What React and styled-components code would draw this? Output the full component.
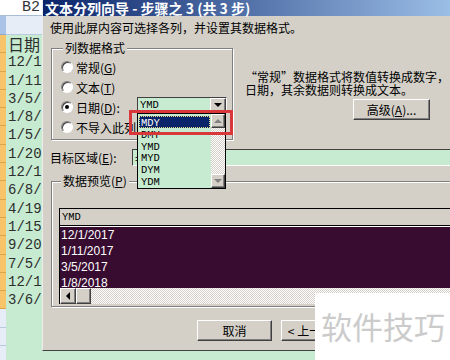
import React from 'react';
import styled, { createGlobalStyle, css } from 'styled-components';

const GlobalStyle = createGlobalStyle`
  html, body { margin: 0; padding: 0; }
  body {
    width: 450px;
    height: 360px;
    overflow: hidden;
    background: #c7ebd1;
    font-family: "Noto Sans CJK SC", sans-serif;
  }
`;

const raised = css`
  background: #d4d0c8;
  border: 1px solid;
  border-color: #fff #404040 #404040 #fff;
  box-shadow: inset -1px -1px #808080;
  box-sizing: border-box;
`;

const checker = css`
  background: repeating-conic-gradient(#fff 0 25%, #d4d0c8 0 50%) 0 0 / 2px 2px;
`;

const Screen = styled.div`
  position: relative;
  width: 450px;
  height: 360px;
  overflow: hidden;
  display: flex;
  align-items: flex-start;
  background: #c7ebd1;
`;

/* spreadsheet strip behind the dialog */
const Sheet = styled.div`
  width: 42px;
  flex: none;
  display: flex;
  flex-direction: column;
`;

const NameBox = styled.div`
  height: 15px;
  background: #fff;
  border-bottom: 1px solid #a9bcd6;
  text-align: right;
  padding-right: 2px;
  font: 15px/15px "Liberation Mono", monospace;
  color: #333;
`;

const HeadRow = styled.div`
  height: 19px;
  display: flex;
`;

const Corner = styled.div`
  width: 6px;
  background: #a8c3e6;
  border-bottom: 1px solid #8ea9cf;
`;

const ColHead = styled.div`
  flex: 1;
  background: #e6edf7;
  border-bottom: 1px solid #b9c9de;
`;

const SheetRow = styled.div`
  height: 18.3px;
  display: flex;
  box-sizing: border-box;
`;

const RowHead = styled.div`
  width: 6px;
  box-sizing: border-box;
  background: ${(p) => (p.$active ? '#f8c46a' : '#e6edf7')};
  border-bottom: 1px solid ${(p) => (p.$active ? '#dba34a' : '#b9c9de')};
`;

const Cell = styled.div`
  flex: 1;
  padding-left: 2px;
  overflow: hidden;
  white-space: nowrap;
  color: #2e2e2e;
  font: ${(p) => (p.$cjk ? '16px/18px "Noto Sans CJK SC"' : '14px/18px "Liberation Mono"')}, monospace;
`;

/* dialog */
const Dialog = styled.div`
  width: 440px;
  height: 351px;
  flex: none;
  box-sizing: border-box;
  display: flex;
  flex-direction: column;
  background: #d4d0c8;
  border-left: 1px solid #ececec;
  border-bottom: 1px solid #404040;
  font: 12px "Noto Sans CJK SC", sans-serif;
  color: #000;
`;

const TitleBar = styled.div`
  height: 16px;
  padding-left: 2px;
  background: linear-gradient(to right, #0a246a, #a6caf0);
  color: #fff;
  font: bold 14px/16px "Noto Sans CJK SC", sans-serif;
  white-space: nowrap;
`;

const Body = styled.div`
  flex: 1;
  display: flex;
  flex-direction: column;
  padding: 4px 0 0 7px;
`;

const Intro = styled.div`
  line-height: 16px;
  white-space: nowrap;
`;

const TopSection = styled.div`
  display: flex;
  align-items: flex-start;
  margin-top: 5px;
`;

const Group = styled.fieldset`
  margin: 0 0 0 1px;
  min-width: 0;
  box-sizing: border-box;
  width: ${(p) => p.$width};
  border: 1px solid #808080;
  box-shadow: inset 1px 1px #fff, 1px 1px #fff;
  padding: ${(p) => p.$pad};
`;

const Legend = styled.legend`
  padding: 0 2px;
  margin-left: 2px;
  line-height: 14px;
  background: #d4d0c8;
`;

const RadioRow = styled.div`
  height: 20px;
  display: flex;
  align-items: ${(p) => (p.$top ? 'flex-start' : 'center')};
  white-space: nowrap;
`;

const Radio = styled.span`
  position: relative;
  width: 12px;
  height: 12px;
  flex: none;
  margin-right: 3px;
  margin-top: ${(p) => (p.$top ? '4px' : '0')};
  border-radius: 50%;
  background: #fff;
  box-sizing: border-box;
  border: 1px solid;
  border-color: #808080 #fff #fff #808080;
  box-shadow: inset 1px 1px #404040;

  &::after {
    content: '';
    display: ${(p) => (p.$checked ? 'block' : 'none')};
    position: absolute;
    left: 3px;
    top: 3px;
    width: 4px;
    height: 4px;
    border-radius: 50%;
    background: #000;
  }
`;

const RadioLabel = styled.span`
  width: ${(p) => p.$width || 'auto'};
  margin-top: ${(p) => (p.$top ? '2px' : '0')};
  flex: none;
`;

const Combo = styled.div`
  position: relative;
  z-index: 2;
  width: 90px;
`;

const ComboField = styled.div`
  height: 16px;
  display: flex;
  box-sizing: border-box;
  background: #c7ebd1;
  border: 1px solid;
  border-color: #404040 #fff #fff #404040;
`;

const MonoText = styled.span`
  flex: 1;
  padding-left: 2px;
  font: 10.5px/14px "Liberation Mono", monospace;
  color: ${(p) => (p.$light ? '#fff' : '#000')};
`;

const ArrowButton = styled.span`
  ${raised}
  width: ${(p) => p.$w || '16px'};
  height: ${(p) => p.$h || '14px'};
  flex: none;
  display: flex;
  align-items: center;
  justify-content: center;
`;

const Arrow = styled.span`
  width: 0;
  height: 0;
  border-style: solid;
  ${({ $dir, $color = '#000' }) => {
    if ($dir === 'down')
      return css`border-width: 4px 4px 0 4px; border-color: ${$color} transparent transparent transparent;`;
    if ($dir === 'up')
      return css`border-width: 0 4px 4px 4px; border-color: transparent transparent ${$color} transparent;`;
    return css`border-width: 4px 4px 4px 0; border-color: transparent ${$color} transparent transparent;`;
  }}
`;

const DropList = styled.div`
  position: absolute;
  top: 16px;
  left: 0;
  width: 89px;
  height: 76px;
  box-sizing: border-box;
  display: flex;
  background: #c7ebd1;
  border: 1px solid #000;
`;

const Items = styled.div`
  flex: 1;
  padding: 2px 1px 0 1px;
`;

const Item = styled.div`
  height: 11.8px;
  display: flex;
  box-sizing: border-box;
  ${(p) =>
    p.$selected &&
    css`
      background: #0a246a;
      outline: 1px dotted #e8d880;
      outline-offset: -1px;
    `}
`;

const VScroll = styled.div`
  width: 14px;
  display: flex;
  flex-direction: column;
  justify-content: space-between;
  ${checker}
`;

const Highlight = styled.div`
  position: absolute;
  left: -8px;
  top: 13px;
  width: 104px;
  height: 25px;
  box-sizing: border-box;
  border: 3px solid #d8383a;
  z-index: 3;
`;

const Side = styled.div`
  margin-left: 12px;
  padding-top: 29px;
  display: flex;
  flex-direction: column;
  align-items: flex-start;
`;

const Note = styled.div`
  line-height: 13px;
  white-space: nowrap;
`;

const Button = styled.button`
  ${raised}
  width: ${(p) => p.$width || '75px'};
  height: 21px;
  margin-left: ${(p) => p.$offset || '0'};
  margin-top: ${(p) => p.$top || '0'};
  padding: 0;
  font: 12px "Noto Sans CJK SC", sans-serif;
  color: #000;
  white-space: nowrap;
`;

const TargetRow = styled.div`
  display: flex;
  align-items: center;
  margin-top: 9px;
  height: 17px;
`;

const FieldLabel = styled.span`
  width: 82px;
  flex: none;
  white-space: nowrap;
`;

const Input = styled.div`
  flex: 1;
  height: 17px;
  box-sizing: border-box;
  padding-left: 2px;
  background: #c7ebd1;
  border: 1px solid;
  border-color: #404040 #fff #fff #404040;
  line-height: 15px;
`;

const PreviewBox = styled.div`
  height: 96px;
  box-sizing: border-box;
  display: flex;
  flex-direction: column;
  border-top: 1px solid #000;
  border-left: 1px solid #000;
  background: #d4d0c8;
`;

const PreviewHead = styled.div`
  height: 16px;
  display: flex;
  align-items: center;
  border-bottom: 1px solid #000;
  box-shadow: 0 1px #fff;
  margin-bottom: 1px;
`;

const DataArea = styled.div`
  height: 61px;
  overflow: hidden;
  background: #380b30;
`;

const DataRow = styled.div`
  height: 16px;
  padding-left: 1px;
  font: 12px/16px "Liberation Sans", Arial, sans-serif;
  color: #fff;
`;

const HScroll = styled.div`
  height: 16px;
  display: flex;
  ${checker}
`;

const Thumb = styled.span`
  ${raised}
  width: 15px;
  height: 16px;
`;

const ButtonRow = styled.div`
  display: flex;
  gap: 9px;
  margin-top: 13px;
  padding-left: 147px;
`;

const Watermark = styled.div`
  position: absolute;
  left: 315px;
  top: 293px;
  right: 0;
  bottom: 0;
  z-index: 5;
  background: #fff;
  padding: 17px 0 0 6px;
  color: #cbcbcb;
  font: 31px/31px "Noto Sans CJK SC", sans-serif;
  white-space: nowrap;
`;

const Key = ({ k }) => (
  <>
    (<u>{k}</u>)
  </>
);

const sheetRows = [
  '日期', '12/1/2017', '1/11/2017', '3/5/2017', '1/8/2018', '1/5/2018', '1/20/2018',
  '12/1/2018', '6/8/2018', '4/19/2018', '1/15/2019', '9/20/2019', '7/5/2019',
  '12/1/2019', '3/6/2020',
];

const formats = ['MDY', 'DMY', 'YMD', 'MYD', 'DYM', 'YDM'];
const preview = ['12/1/2017', '1/11/2017', '3/5/2017', '1/8/2018', '1/5/2018'];

export default function App() {
  return (
    <Screen>
      <GlobalStyle />
      <Sheet>
        <NameBox>B2</NameBox>
        <HeadRow>
          <Corner />
          <ColHead />
        </HeadRow>
        {sheetRows.map((v, i) => (
          <SheetRow key={i}>
            <RowHead $active />
            <Cell $cjk={i === 0}>{v}</Cell>
          </SheetRow>
        ))}
        {[0, 1, 2].map((i) => (
          <SheetRow key={'e' + i}>
            <RowHead />
            <Cell />
          </SheetRow>
        ))}
      </Sheet>

      <Dialog>
        <TitleBar>文本分列向导 - 步骤之 3 (共 3 步)</TitleBar>
        <Body>
          <Intro>使用此屏内容可选择各列，并设置其数据格式。</Intro>

          <TopSection>
            <Group $width="182px" $pad="2px 4px 2px 9px">
              <Legend>列数据格式</Legend>
              <RadioRow>
                <Radio />
                <RadioLabel>常规<Key k="G" /></RadioLabel>
              </RadioRow>
              <RadioRow>
                <Radio />
                <RadioLabel>文本<Key k="T" /></RadioLabel>
              </RadioRow>
              <RadioRow $top>
                <Radio $checked $top />
                <RadioLabel $width="61px" $top>日期<Key k="D" />:</RadioLabel>
                <Combo>
                  <ComboField>
                    <MonoText>YMD</MonoText>
                    <ArrowButton>
                      <Arrow $dir="down" />
                    </ArrowButton>
                  </ComboField>
                  <DropList>
                    <Items>
                      {formats.map((f, i) => (
                        <Item key={f} $selected={i === 0}>
                          <MonoText $light={i === 0}>{f}</MonoText>
                        </Item>
                      ))}
                    </Items>
                    <VScroll>
                      <ArrowButton $w="14px" $h="14px">
                        <Arrow $dir="up" $color="#808080" />
                      </ArrowButton>
                      <ArrowButton $w="14px" $h="14px">
                        <Arrow $dir="down" $color="#808080" />
                      </ArrowButton>
                    </VScroll>
                  </DropList>
                  <Highlight />
                </Combo>
              </RadioRow>
              <RadioRow>
                <Radio />
                <RadioLabel>不导入此列(跳过)<Key k="I" /></RadioLabel>
              </RadioRow>
            </Group>

            <Side>
              <Note>
                “常规”数据格式将数值转换成数字，
                <br />
                日期，其余数据则转换成文本。
              </Note>
              <Button $width="77px" $offset="108px" $top="3px">
                高级<Key k="A" />...
              </Button>
            </Side>
          </TopSection>

          <TargetRow>
            <FieldLabel>目标区域<Key k="E" />:</FieldLabel>
            <Input>=$B$2</Input>
          </TargetRow>

          <Group $width="440px" $pad="20px 0 2px 7px" style={{ marginTop: '8px' }}>
            <Legend>数据预览<Key k="P" /></Legend>
            <PreviewBox>
              <PreviewHead>
                <MonoText>YMD</MonoText>
              </PreviewHead>
              <DataArea>
                {preview.map((d) => (
                  <DataRow key={d}>{d}</DataRow>
                ))}
              </DataArea>
              <HScroll>
                <ArrowButton $w="16px" $h="16px">
                  <Arrow $dir="left" />
                </ArrowButton>
                <Thumb />
              </HScroll>
            </PreviewBox>
          </Group>

          <ButtonRow>
            <Button>取消</Button>
            <Button>&lt; 上一步<Key k="B" /></Button>
            <Button>下一步<Key k="N" /> &gt;</Button>
          </ButtonRow>
        </Body>
      </Dialog>

      <Watermark>软件技巧</Watermark>
    </Screen>
  );
}
